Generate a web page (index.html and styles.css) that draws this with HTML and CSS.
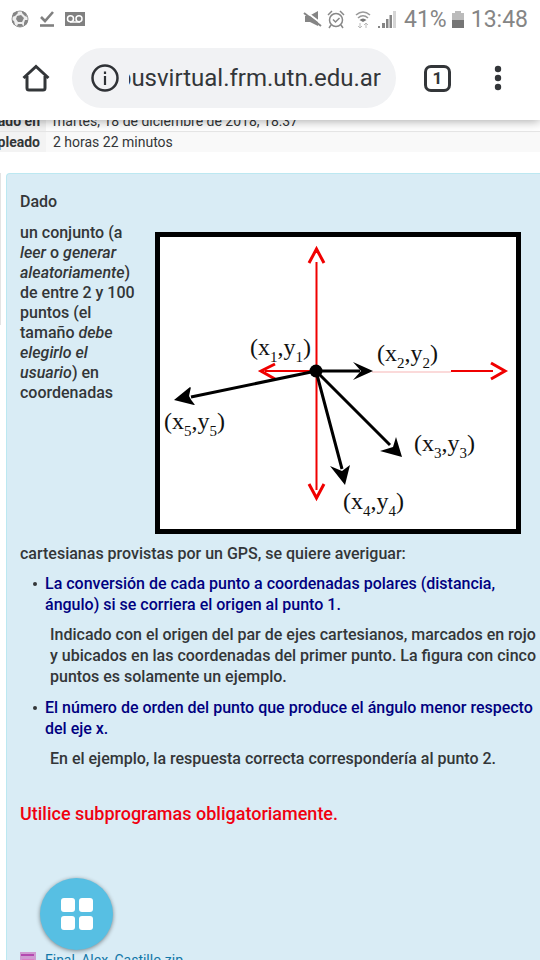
FILE: index.html
```html
<!DOCTYPE html>
<html lang="es">
<head>
<meta charset="utf-8">
<meta name="viewport" content="width=device-width">
<title>Campus virtual</title>
<link rel="stylesheet" href="styles.css">
</head>
<body>
<header class="chrome">
  <div class="status">
    <svg class="ic-ball" width="18" height="18" viewBox="0 0 18 18"><circle cx="9" cy="9" r="8" fill="#eee" stroke="#999"/><path d="M6 6l4-1 3 3-2 4-4 0-2-3zM2 3l4-2 1 2-3 3-3 1zM11 1l4 2 1 4-2-1-3-3zM1 10l2 1 1 4-1 0-2-3zM7 14l4 0 1 2-3 1-3-1zM14 10l3 0-1 4-3 2 0-3z" fill="#858585"/></svg>
    <svg class="ic-check" width="16" height="18" viewBox="0 0 16 18"><path d="M2 7l4 4 8-9" fill="none" stroke="#808080" stroke-width="2.6"/><path d="M1 15.500h14" stroke="#808080" stroke-width="2.600"/></svg>
    <svg class="ic-tape" width="20" height="14" viewBox="0 0 20 14"><path d="M0 0h20v14H0z" fill="#808080"/><path d="M5 10h10" stroke="#fff" stroke-width="1.500"/><circle cx="5.500" cy="6.800" r="3" fill="#808080" stroke="#fff" stroke-width="1.500"/><circle cx="14" cy="6.800" r="3" fill="#808080" stroke="#fff" stroke-width="1.500"/></svg>
    <div class="status-right">
      <svg width="19" height="19" viewBox="0 0 19 19"><path d="M2 6h4l9-5v15l-8-4H2z" fill="#858585"/><path d="M2 1l17 13" stroke="#fff" stroke-width="2"/><path d="M1 3l17 13" stroke="#858585" stroke-width="2"/></svg>
      <svg width="18" height="19" viewBox="0 0 18 19"><circle cx="9" cy="10" r="6.500" fill="none" stroke="#888" stroke-width="1.500"/><path d="M6 9.500l2.500 2.500 4-4M1 5l4-4M17 5l-4-4M4 15l-2 3M14 15l2 3" fill="none" stroke="#888" stroke-width="1.500"/></svg>
      <svg class="ic-wifi" width="16" height="19" viewBox="0 0 16 19"><path d="M1 5q7-6 14 0M3 8q5-4.500 10 0" fill="none" stroke="#999" stroke-width="1.600"/><path d="M4.500 10q3.500-3 7 0L8 12z" fill="#777"/><path d="M5 13v5M3 16l2 2 2-2M11 18v-5M9 15l2-2 2 2" fill="none" stroke="#bbb"/></svg>
      <svg class="ic-signal" width="18" height="19" viewBox="0 0 18 19"><path d="M0 16h2v2H0zM4 13h3v5H4zM8 9h2.500v9H8zM11.500 5H14v13h-2.500z" fill="#858585"/><path d="M15 1h3v17h-3z" fill="#d5d5d5"/></svg>
      <span>41%</span>
      <svg class="ic-batt" width="12" height="17" viewBox="0 0 12 17"><path d="M3 0h6v2h3v7H0V2h3z" fill="#bbb"/><path d="M0 9h12v8H0z" fill="#757575"/></svg>
      <span class="clock">13:48</span>
    </div>
  </div>
  <div class="toolbar">
    <button class="icon-btn home" aria-label="Inicio"><svg width="28" height="28" viewBox="0 0 28 28"><path d="M1.500 14L14 2.500 26.500 14M5 12v12q0 2 2 2h14q2 0 2-2V12" fill="none" stroke="#333639" stroke-width="3"/></svg></button>
    <div class="omnibox">
      <svg width="28" height="28" viewBox="0 0 28 28"><circle cx="14" cy="14" r="12.500" fill="none" stroke="#2f3236" stroke-width="2.500"/><path d="M14 7.500v2.500M14 12v9" stroke="#2f3236" stroke-width="2.200"/></svg>
      <input class="url" type="text" aria-label="Dirección" value="campusvirtual.frm.utn.edu.ar">
    </div>
    <button class="tabs" aria-label="Pestañas">1</button>
    <button class="icon-btn more" aria-label="Más opciones"><svg width="8" height="26" viewBox="0 0 8 26"><g fill="#333639"><circle cx="4" cy="4" r="3.200"/><circle cx="4" cy="13" r="3.200"/><circle cx="4" cy="22" r="3.200"/></g></svg></button>
  </div>
</header>
<main class="page">
  <table class="summary">
    <tr><th scope="row">Finalizado en</th><td>martes, 18 de diciembre de 2018, 18:37</td></tr>
    <tr class="odd"><th scope="row">Tiempo empleado</th><td>2 horas 22 minutos</td></tr>
  </table>
  <div class="question">
    <div class="info"></div>
    <section class="panel">
      <p class="lead">Dado</p>
      <div class="intro">
        <p>un conjunto (a <em>leer</em> o <em>generar aleatoriamente</em>) de entre 2 y 100 puntos (el tamaño <em>debe elegirlo el usuario</em>) en coordenadas</p>
        <svg class="figure" viewBox="0 0 366 302" role="img" aria-label="Ejes cartesianos con cinco puntos">
          <path d="M2.500 2.500h361v297h-361z" fill="#fff" stroke="#000" stroke-width="5"/>
          <g fill="none" stroke="#f00000" stroke-width="2">
            <path d="M161.500 30v228M110 139h52M296 139h42"/>
            <path d="M217 140h79" stroke="#f7b5b5" stroke-width="1"/>
            <path d="M154 31l7.500-14 7.500 14M154 252l7.500 14 7.500-14M120 132l-14 7 14 8M336 131l14 8-14 8" stroke-width="3"/>
          </g>
          <g stroke="#000" stroke-width="3"><path d="M161 139h44M161 139L36 165M161 139l74 74M161 139l26 98"/></g>
          <circle cx="161" cy="139" r="6.500"/>
          <path d="M218 139l-20-9 8 9-8 9zM19 168l16-13-1 10 6 8zM19 168l17-13-2 9 5 9zM247 225l-6-20-3 10-13 4zM190 253l5-20-8 6-12-5z"/>
          <g font-family="Liberation Serif, serif" font-size="24" fill="#111">
            <text x="95" y="123">(x<tspan font-size="15" dy="7">1</tspan><tspan dy="-7">,y</tspan><tspan font-size="15" dy="7">1</tspan><tspan dy="-7">)</tspan></text>
            <text x="222" y="129">(x<tspan font-size="15" dy="7">2</tspan><tspan dy="-7">,y</tspan><tspan font-size="15" dy="7">2</tspan><tspan dy="-7">)</tspan></text>
            <text x="259" y="219">(x<tspan font-size="15" dy="7">3</tspan><tspan dy="-7">,y</tspan><tspan font-size="15" dy="7">3</tspan><tspan dy="-7">)</tspan></text>
            <text x="188" y="277">(x<tspan font-size="15" dy="7">4</tspan><tspan dy="-7">,y</tspan><tspan font-size="15" dy="7">4</tspan><tspan dy="-7">)</tspan></text>
            <text x="9" y="197">(x<tspan font-size="15" dy="7">5</tspan><tspan dy="-7">,y</tspan><tspan font-size="15" dy="7">5</tspan><tspan dy="-7">)</tspan></text>
          </g>
        </svg>
      </div>
      <p class="after">cartesianas provistas por un GPS, se quiere averiguar:</p>
      <ul class="tasks">
        <li><span class="task">La conversión de cada punto a coordenadas polares (distancia, ángulo) si se corriera el origen al punto 1.</span>
          <p>Indicado con el origen del par de ejes cartesianos, marcados en rojo y ubicados en las coordenadas del primer punto. La figura con cinco puntos es solamente un ejemplo.</p></li>
        <li><span class="task">El número de orden del punto que produce el ángulo menor respecto del eje x.</span>
          <p>En el ejemplo, la respuesta correcta correspondería al punto 2.</p></li>
      </ul>
      <p class="warning">Utilice subprogramas obligatoriamente.</p>
      <a class="file" href="#"><svg width="16" height="16" viewBox="0 0 16 16"><path d="M0 0h16v16H0z" fill="#cf9bd2"/><path d="M1 2h13v2H1z" fill="#b34ab0"/><path d="M2 7h12v2H2z" fill="#dc7fc8"/></svg>Final_Alex_Castillo.zip</a>
    </section>
  </div>
</main>
<button class="fab" aria-label="Menú"><svg width="32" height="32" viewBox="0 0 32 32"><g fill="#fff"><rect width="14" height="14" rx="3"/><rect x="18" width="14" height="14" rx="3"/><rect y="18" width="14" height="14" rx="3"/><rect x="18" y="18" width="14" height="14" rx="3"/></g></svg></button>
</body>
</html>
```
FILE: styles.css
```css
* { box-sizing: border-box; }
body {
  margin: 0;
  height: 100vh;
  display: flex;
  flex-direction: column;
  overflow: hidden;
  position: relative;
  background: #fff;
  color: #333638;
  font-family: Roboto, sans-serif;
  font-size: 16px;
}
p { margin: 0; }
button { border: 0; padding: 0; background: none; font-family: inherit; }
svg { display: block; flex: none; }

.chrome {
  flex: none;
  height: 120px;
  position: relative;
  background: #fff;
  box-shadow: 0 1px 10px rgba(0, 0, 0, .35);
}
.status {
  height: 38px;
  display: flex;
  align-items: center;
  padding: 0 12px 0 11px;
}
.ic-check { margin-left: 10px; }
.ic-tape { margin-left: 10px; }
.status-right {
  margin-left: auto;
  display: flex;
  align-items: center;
  gap: 5px;
  font-size: 23px;
  color: #858585;
}
.ic-wifi { margin-left: 5px; }
.ic-signal { margin-left: 2px; }
.ic-signal + span { margin-left: 3px; }
.clock { margin-left: 2px; }

.toolbar {
  height: 80px;
  display: flex;
  align-items: center;
  padding: 0 35px 0 22px;
}
.icon-btn { display: flex; align-items: center; justify-content: center; }
.home { width: 28px; }
.omnibox {
  flex: 1;
  min-width: 0;
  height: 60px;
  margin: 0 28px 0 22px;
  padding: 0 15px 0 19px;
  border-radius: 30px;
  background: #f1f2f4;
  display: flex;
  align-items: center;
  gap: 10px;
}
.url {
  flex: 1;
  min-width: 0;
  height: 40px;
  border: 0;
  padding: 0;
  background: none;
  direction: rtl;
  font-family: inherit;
  font-size: 24px;
  color: #333639;
}
.tabs {
  width: 27px;
  height: 27px;
  border: 3px solid #333639;
  border-radius: 7px;
  font-size: 17px;
  font-weight: 700;
  line-height: 20px;
  color: #333639;
}
.more { margin-left: 40px; width: 14px; }

.page { flex: 1; min-height: 0; overflow: hidden; }
.summary {
  width: 100%;
  margin-top: -9px;
  border-collapse: collapse;
  font-size: 14px;
  line-height: 18px;
}
.summary th {
  width: 46px;
  max-width: 46px;
  padding: 1px 6px 1px 0;
  background: #f3f3f3;
  text-align: right;
  white-space: nowrap;
  direction: rtl;
  overflow: hidden;
  font-weight: 700;
}
.summary td { padding: 1px 7px; }
.summary .odd td { background: #f9f9f9; }
.summary .odd { border-top: 1px solid #e6e6e6; }

.question { display: flex; margin-top: 21px; }
.info { width: 1px; margin-right: 5px; height: 152px; background: #e3e3e3; }
.panel {
  flex: 1;
  min-width: 0;
  padding: 18px 1px 40px 13px;
  border: 1px solid #bce8f1;
  border-right: 0;
  border-radius: 4px 0 0 0;
  background: #d9ecf5;
  font-weight: 500;
}
.lead { line-height: 20px; }
.intro {
  display: grid;
  grid-template-columns: 1fr 3fr;
  column-gap: 13px;
  margin-top: 11px;
  padding-right: 18px;
  line-height: 20px;
}
.figure { width: 100%; margin-top: 9px; font-weight: 400; }
.after { margin-top: 10px; line-height: 20px; }
.tasks { margin: 9px 0 0; padding-left: 25px; line-height: 21px; list-style: none; }
.tasks li { margin-bottom: 10px; position: relative; }
.tasks li::before {
  content: "";
  position: absolute;
  left: -12px;
  top: 9px;
  width: 4px;
  height: 4px;
  border-radius: 2px;
  background: #333638;
}
.task { color: #000080; }
.tasks p { margin: 9px 0 0 5px; }
.warning { margin-top: 34px; font-size: 18px; line-height: 22px; color: #f00010; }
.file {
  display: flex;
  align-items: center;
  gap: 9px;
  margin-top: 125px;
  font-size: 14px;
  font-weight: 400;
  line-height: 20px;
  color: #1177a8;
  text-decoration: none;
}
.fab {
  position: absolute;
  left: 40px;
  bottom: 10px;
  width: 73px;
  height: 72px;
  border-radius: 50%;
  background: #57bfe3;
  display: flex;
  align-items: center;
  justify-content: center;
  box-shadow: 0 1px 4px rgba(0, 0, 0, .45);
}
```
